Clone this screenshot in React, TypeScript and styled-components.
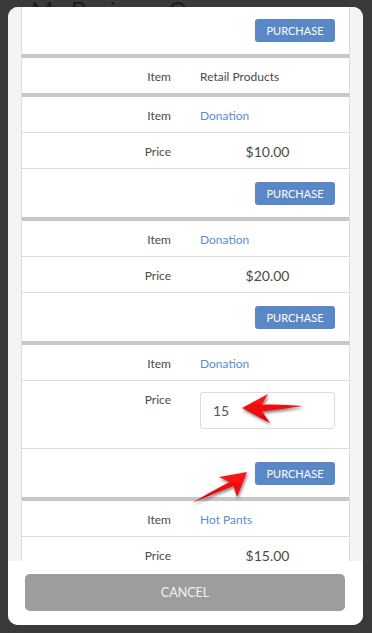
import React from "react";
import styled, { createGlobalStyle } from "styled-components";

const GlobalStyle = createGlobalStyle`
  html, body { margin: 0; padding: 0; }
  body {
    background: #3a3a3a;
    font-family: Lato, "Noto Sans", sans-serif;
  }
`;

const Page = styled.div`
  position: relative;
  width: 372px;
  height: 633px;
  overflow: hidden;
  background: #3a3a3a;
`;

const BackTitle = styled.div`
  display: flex;
  align-items: center;
  gap: 6px;
  margin-top: -4px;
  padding-left: 31px;
  font-size: 24px;
  line-height: 28px;
  color: #1c1c1c;
`;

const InfoCircle = styled.span`
  display: inline-flex;
  width: 14px;
  height: 14px;
  margin-top: 2px;
  border: 2px solid #1c1c1c;
  border-radius: 50%;
`;

const Modal = styled.div`
  position: absolute;
  left: 8px;
  top: 7px;
  width: 355px;
  height: 618px;
  border-radius: 10px;
  background: #ffffff;
  overflow: hidden;
  display: flex;
  flex-direction: column;
`;

const ScrollArea = styled.div`
  flex: 1;
  min-height: 0;
  overflow: hidden;
  background: #f4f4f4;
  padding: 0 13px;
`;

const List = styled.div`
  margin-top: -1px;
  display: flex;
  flex-direction: column;
  gap: 4px;
  background: #c7c7c7;
  border-left: 1px solid #dcdcdc;
  border-right: 1px solid #dcdcdc;
`;

const Card = styled.div`
  background: #ffffff;
`;

const Row = styled.div`
  display: grid;
  grid-template-columns: 149px 135px;
  column-gap: 29px;
  & + & {
    border-top: 1px solid #dddddd;
  }
`;

const Label = styled.div`
  text-align: right;
  font-size: 12px;
  height: 35px;
  line-height: 37px;
  color: #4a4a4a;
`;

const Value = styled.div<{ $link?: boolean; $price?: boolean; $input?: boolean }>`
  font-size: ${(p) => (p.$price ? "14px" : "12px")};
  height: ${(p) => (p.$input ? "auto" : "35px")};
  line-height: 37px;
  color: ${(p) => (p.$link ? "#5b8dcf" : "#4a4a4a")};
  text-align: ${(p) => (p.$price ? "center" : "left")};
  padding: ${(p) => (p.$input ? "11px 0 19px" : "0")};
`;

const PriceInput = styled.div`
  box-sizing: border-box;
  height: 37px;
  border: 1px solid #dcdcdc;
  border-radius: 3px;
  padding-left: 12px;
  font-size: 14px;
  line-height: 35px;
  color: #555555;
`;

const ActionRow = styled.div`
  height: 48px;
  display: flex;
  align-items: center;
  justify-content: flex-end;
  padding-right: 14px;
  ${Row} + & {
    border-top: 1px solid #dddddd;
  }
`;

const PurchaseButton = styled.button`
  width: 80px;
  height: 23px;
  border: none;
  border-radius: 3px;
  background: #5a87c6;
  color: #ffffff;
  font-family: Lato, "Noto Sans", sans-serif;
  font-size: 11px;
  padding: 0;
`;

const Footer = styled.div`
  height: 64px;
  box-sizing: border-box;
  padding: 13px 18px 14px 17px;
  background: #ffffff;
`;

const CancelButton = styled.button`
  width: 100%;
  height: 37px;
  border: none;
  border-radius: 5px;
  background: #9d9d9d;
  color: #f2f2f2;
  font-family: Lato, "Noto Sans", sans-serif;
  font-size: 12.5px;
`;

const Arrows = styled.svg`
  position: absolute;
  left: 0;
  top: 0;
  pointer-events: none;
`;

type Item = { name: string; link: boolean; price?: string; input?: string };

const items: Item[] = [
  { name: "Donation", link: true, price: "$10.00" },
  { name: "Donation", link: true, price: "$20.00" },
  { name: "Donation", link: true, input: "15" },
];

export default function App() {
  return (
    <Page>
      <GlobalStyle />
      <BackTitle>
        My Business <InfoCircle />
      </BackTitle>
      <Modal>
        <ScrollArea>
          <List>
            <Card>
              <ActionRow>
                <PurchaseButton>PURCHASE</PurchaseButton>
              </ActionRow>
            </Card>
            <Card>
              <Row>
                <Label>Item</Label>
                <Value>Retail Products</Value>
              </Row>
            </Card>
            {items.map((it, i) => (
              <Card key={i}>
                <Row>
                  <Label>Item</Label>
                  <Value $link={it.link}>{it.name}</Value>
                </Row>
                <Row>
                  <Label>Price</Label>
                  {it.input ? (
                    <Value $input>
                      <PriceInput>{it.input}</PriceInput>
                    </Value>
                  ) : (
                    <Value $price>{it.price}</Value>
                  )}
                </Row>
                <ActionRow>
                  <PurchaseButton>PURCHASE</PurchaseButton>
                </ActionRow>
              </Card>
            ))}
            <Card>
              <Row>
                <Label>Item</Label>
                <Value $link>Hot Pants</Value>
              </Row>
              <Row>
                <Label>Price</Label>
                <Value $price>$15.00</Value>
              </Row>
            </Card>
          </List>
        </ScrollArea>
        <Footer>
          <CancelButton>CANCEL</CancelButton>
        </Footer>
      </Modal>
      <Arrows width="372" height="633" viewBox="0 0 372 633">
        <defs>
          <linearGradient id="rg" x1="0" y1="0" x2="0" y2="1">
            <stop offset="0" stopColor="#ff1a1a" />
            <stop offset="1" stopColor="#e00000" />
          </linearGradient>
          <filter id="sh" x="-20%" y="-20%" width="140%" height="160%">
            <feDropShadow dx="1" dy="2" stdDeviation="1.5" floodColor="#000" floodOpacity="0.5" />
          </filter>
        </defs>
        <path
          d="M242 408 L268 394 L262 404.5 Q284 404 303 406 Q284 409 262 411.5 L270 423 Z"
          fill="url(#rg)"
          filter="url(#sh)"
        />
        <path
          d="M247 472 L219 477 L229.5 482 Q210 492 192 503 Q213 494 233.5 486 L237 497 Z"
          fill="url(#rg)"
          filter="url(#sh)"
        />
      </Arrows>
    </Page>
  );
}
